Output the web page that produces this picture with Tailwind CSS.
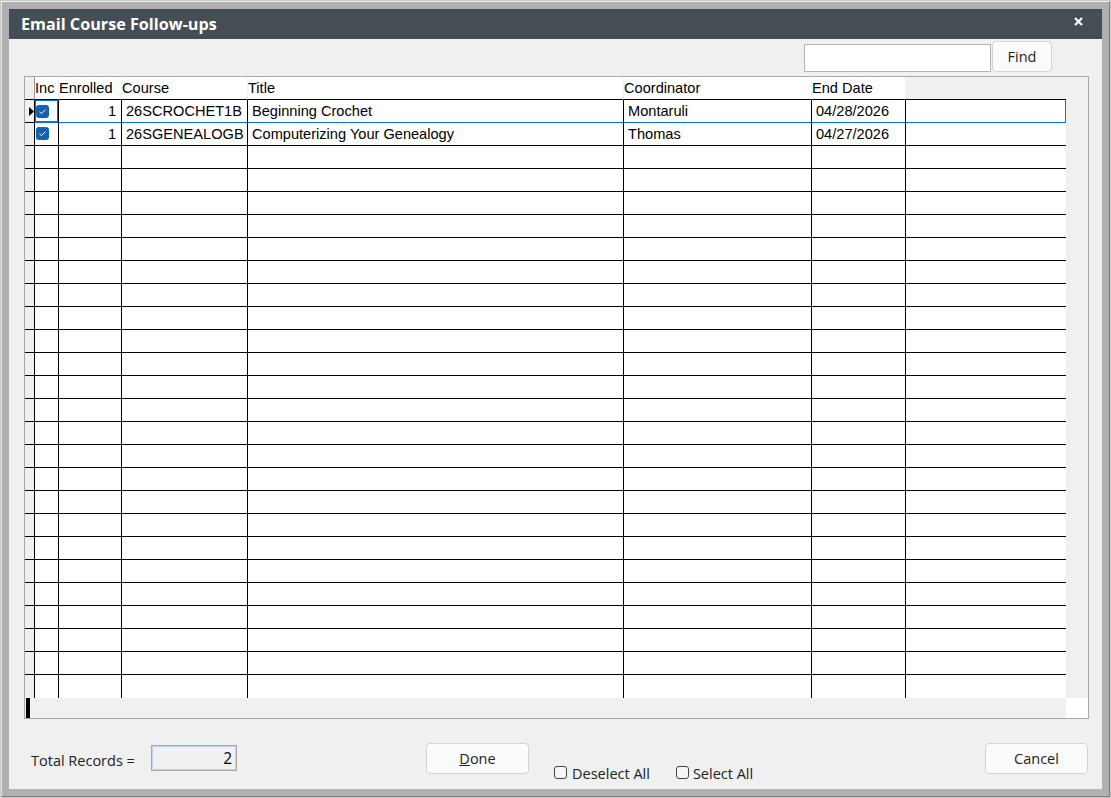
<!DOCTYPE html>
<html lang="en">
<head>
    <meta charset="UTF-8">
    <title>Email Course Follow-ups</title>
    <script src="https://cdn.jsdelivr.net/npm/@tailwindcss/browser@4"></script>
</head>
<body class="w-[1111px] h-[798px] overflow-hidden bg-[#b0b0b0] font-['Liberation_Sans',sans-serif] text-black">
    <div class="w-full h-full border border-[#c8c8c8]">
    <div class="w-full h-full border border-t-[#f0f0f0] border-l-[#e4e4e4] border-r-[#7c7c7c] border-b-[#7c7c7c] p-[7px]">
        <div class="w-[1093px] h-[780px] bg-[#f0f0f0] flex flex-col">
            <!-- Title bar -->
            <div class="h-[30px] shrink-0 bg-[#454d55] flex items-center justify-between pl-[12px] pr-[19px] text-white">
                <span class="font-['Open_Sans',sans-serif] font-bold text-[16.2px]">Email Course Follow-ups</span>
                <svg width="9" height="9" viewBox="0 0 9 9" class="mb-[5px]"><path d="M1 1l7 7M8 1l-7 7" stroke="#fff" stroke-width="2.2"/></svg>
            </div>

            <!-- Find -->
            <div class="h-[37px] shrink-0 flex items-start justify-end pr-[50px] pt-[2px] gap-[1px]">
                <input type="text" class="w-[187px] h-[28px] mt-[3px] bg-white border border-[#b4b4b4] outline-none">
                <button class="w-[60px] h-[31px] bg-[#fbfbfb] border border-[#d4d4d4] rounded-[4px] font-['Open_Sans',sans-serif] text-[14.5px] text-[#222]">Find</button>
            </div>

            <!-- Grid -->
            <div class="ml-[15px] w-[1065px] h-[643px] shrink-0 border border-[#a8a8a8] bg-white flex">
                <div class="w-[1041px] flex flex-col">
                    <div id="rows" class="flex flex-col"></div>
                    <div class="flex-1 bg-[#f0f0f0] pl-[1px]"><div class="w-[4px] h-full bg-black"></div></div>
                </div>
                <div class="flex-1 flex flex-col">
                    <div class="h-[621px] bg-[#f0f0f0]"></div>
                    <div class="flex-1 bg-white"></div>
                </div>
            </div>

            <!-- Footer -->
            <div class="flex-1 relative flex items-start text-[14.5px] font-['Open_Sans',sans-serif] text-[#222]">
                <span class="ml-[22px] mt-[31px] w-[120px]">Total Records =</span>
                <div class="mt-[26px] w-[86px] h-[26px] bg-[#f0f0f0] border border-[#a8a8a8] text-right">
                    <div class="h-full border border-[#bcd0ea] pr-[3px] text-[15.5px] text-black leading-[22px]">2</div>
                </div>
                <button class="ml-[189px] mt-[24px] w-[103px] h-[31px] bg-[#fbfbfb] border border-[#d4d4d4] rounded-[4px]"><u>D</u>one</button>
                <label class="ml-[25px] mt-[45px] flex items-center gap-[5px] leading-[20px]">
                    <span class="w-[13px] h-[13px] border border-[#444] rounded-[3px] bg-[#f6f6f6] mb-[3px]"></span>Deselect All
                </label>
                <label class="ml-[26px] mt-[45px] flex items-center gap-[4px] leading-[20px]">
                    <span class="w-[13px] h-[13px] border border-[#444] rounded-[3px] bg-[#f6f6f6] mb-[3px]"></span>Select All
                </label>
                <button class="absolute left-[976px] top-[24px] w-[103px] h-[31px] bg-[#fbfbfb] border border-[#d4d4d4] rounded-[4px]">Cancel</button>
            </div>
        </div>
    </div>
    </div>

    <script>
        // column widths match the black grid lines in the form
        const cols = ['w-[24px]', 'w-[63px]', 'w-[126px]', 'w-[376px]', 'w-[188px]', 'w-[94px]', 'w-[160px]'];
        const headers = ['Inc', 'Enrolled', 'Course', 'Title', 'Coordinator', 'End Date'];
        const data = [
            ['1', '26SCROCHET1B', 'Beginning Crochet', 'Montaruli', '04/28/2026'],
            ['1', '26SGENEALOGB', 'Computerizing Your Genealogy', 'Thomas', '04/27/2026']
        ];
        const checkSvg = '<rect width="13" height="13" rx="3" fill="#0f62b8"/><path d="M3.5 6.8l2 1.8 4-4" fill="none" stroke="#fff" stroke-width="1"/></svg>';
        const checkRow2 = '<svg width="13" height="13" viewBox="0 0 13 13" class="ml-[1px] mb-[1px]">' + checkSvg;
        // the current cell gets its own blue focus box
        const checkCurrent = '<div class="w-full h-full border border-[#0078d7] flex items-center"><svg width="13" height="13" viewBox="0 0 13 13" class="mt-[1px]">' + checkSvg + '</div>';
        const arrow = '<svg width="5" height="9" viewBox="0 0 5 9"><path d="M0 0l5 4.5-5 4.5z" fill="#000"/></svg>';

        let html = '<div class="flex h-[23px]"><div class="w-[10px] bg-[#f0f0f0] border-r border-b border-r-[#999] border-b-black"></div>';
        headers.forEach((h, i) => {
            html += '<div class="' + cols[i] + ' bg-white border-r border-r-[#f0f0f0] border-b border-b-black text-[14.6px] leading-[22px] whitespace-nowrap overflow-hidden">' + h + '</div>';
        });
        html += '<div class="' + cols[6] + ' bg-[#f0f0f0] border-b border-b-black"></div></div>';

        for (let r = 0; r < 26; r++) {
            const row = data[r];
            const last = r === 25;
            const sel = r === 0;
            const bottom = last ? '' : (sel ? 'border-b border-b-[#0078d7]' : 'border-b border-b-black');
            html += '<div class="flex h-[23px]">';
            html += '<div class="w-[10px] bg-[#f0f0f0] border-r border-r-black flex items-center justify-end ' + (last ? '' : 'border-b border-b-black') + '">' + (sel ? arrow : '') + '</div>';
            for (let c = 0; c < 7; c++) {
                const lastCol = c === 6;
                let cls = cols[c] + ' h-[23px] flex items-center whitespace-nowrap overflow-hidden text-[14.6px] ' + bottom;
                if (lastCol) cls += sel ? ' border-r border-r-[#0078d7]' : '';
                else cls += ' border-r border-r-black';
                if (c === 1) cls += ' justify-end pr-[5px] pt-[1px]';
                else if (c > 1) cls += ' pl-[4px] pt-[1px]';
                let txt = '';
                if (row) {
                    if (c === 0) txt = sel ? checkCurrent : checkRow2;
                    else if (c < 6) txt = row[c - 1];
                }
                html += '<div class="' + cls + '">' + txt + '</div>';
            }
            html += '</div>';
        }
        document.getElementById('rows').innerHTML = html;
    </script>
</body>
</html>
